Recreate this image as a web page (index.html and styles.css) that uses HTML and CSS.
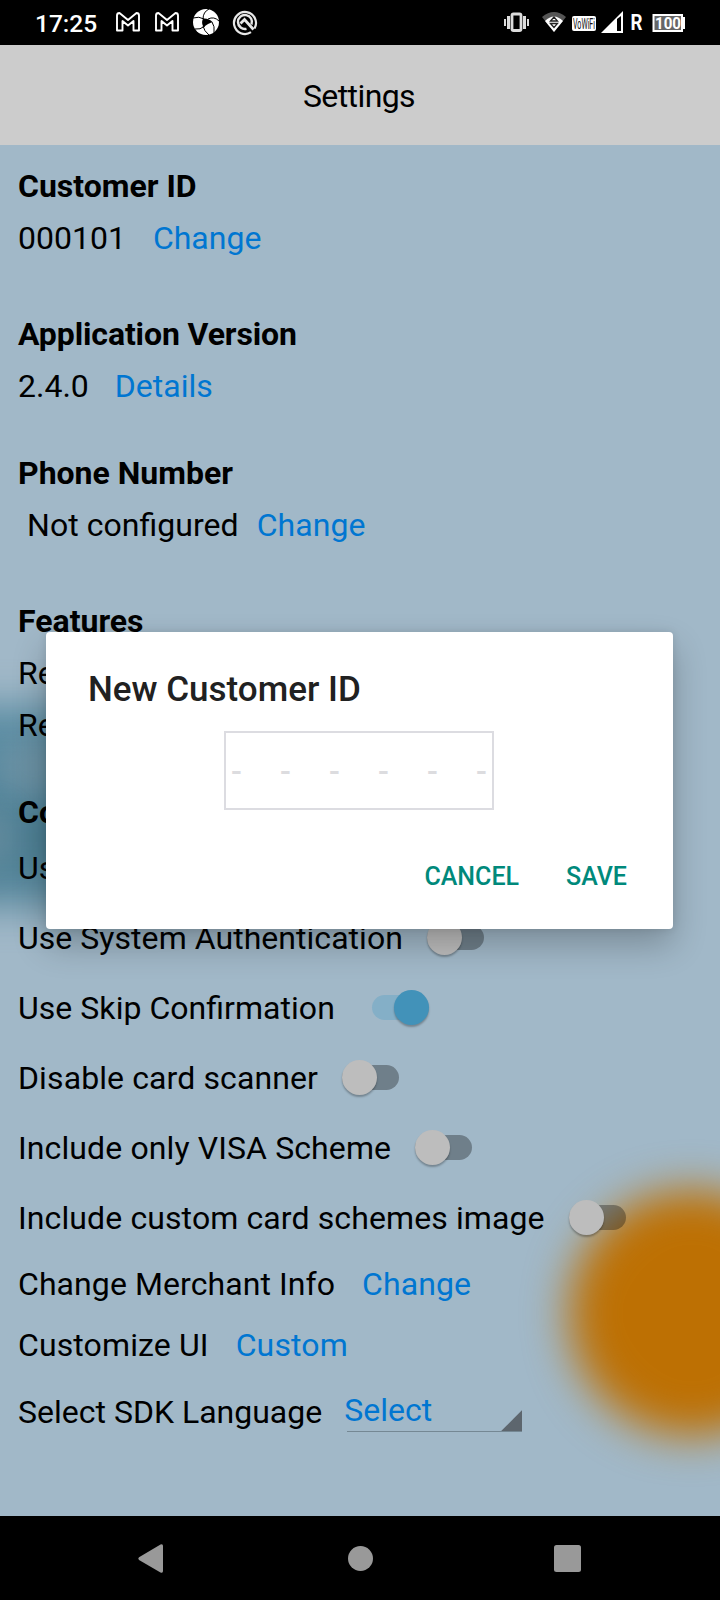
FILE: index.html
```html
<!DOCTYPE html>
<html lang="en">
<head>
<meta charset="utf-8">
<title>Settings</title>
<link rel="stylesheet" href="styles.css">
</head>
<body>
<div class="screen">
  <header class="status">
    <span class="clock">17:25</span>
    <svg class="notif" width="150" height="28" viewBox="0 0 150 28" fill="none" stroke="#fff">
      <g stroke-width="1.9" stroke-linejoin="round">
        <path d="M2 21.500V6.500Q2 4 4.500 4L13 11L21.500 4Q24 4 24 6.500V21.500H18.500V12L13 16.500L7.500 12V21.500Z"/>
        <path d="M41 21.500V6.500Q41 4 43.500 4L52 11L60.500 4Q63 4 63 6.500V21.500H57.500V12L52 16.500L46.500 12V21.500Z"/>
      </g>
      <circle cx="91" cy="13" r="13" fill="#fff" stroke="none"/>
      <path d="M88 9.500Q94 9 97.500 13Q92 15 88.500 18Q86 14 88 9.500Z" fill="#000" stroke="none"/>
      <path d="M78 9Q84 7 89 10M94 0Q88 3 88 10M104 12Q99 7 93 10M99 24Q100 17 97 13M80 20Q85 21 90 17M88 17Q89 22 94 26" stroke="#000" stroke-width="1"/>
      <g stroke="#e8e8e8">
        <path d="M136 23.200A11 11 0 1 1 139.500 19.500" stroke-width="2.200"/>
        <path d="M131.500 19.800A7 7 0 1 1 136.500 15.500" stroke-width="2.400"/>
        <path d="M125.500 14.500L129.500 10.500L138.500 20.500" stroke-width="2.800"/>
      </g>
    </svg>
    <svg class="system" width="184" height="24" viewBox="0 0 184 24">
      <g fill="#ddd">
        <rect x="0" y="8" width="2" height="7"/><rect x="3" y="5" width="3" height="13"/>
        <rect x="19" y="5" width="3" height="13"/><rect x="23" y="8" width="2" height="7"/>
      </g>
      <rect x="8" y="3" width="9" height="16.500" rx="1.500" fill="none" stroke="#ddd" stroke-width="2.800"/>
      <path d="M38 6Q50 -4 62 6L50 21Z" fill="#555"/>
      <path d="M41 10Q50 1 59 10L50 21Z" fill="#fff"/>
      <path d="M46.500 10L50 6L53.500 10ZM46.500 12.500L50 16.500L53.500 12.500Z" fill="none" stroke="#222" stroke-width="1.300"/>
      <rect x="68" y="5" width="24" height="15" rx="2" fill="#fff"/>
      <text x="69" y="18" class="vowifi" textLength="22" lengthAdjust="spacingAndGlyphs">VoWiFi</text>
      <path d="M97 22L119 0V22Z" fill="#fff"/><path d="M113 8V20H117V5Z" fill="#000"/>
      <text x="126.500" y="19" class="roam" textLength="12" lengthAdjust="spacingAndGlyphs">R</text>
      <path d="M148.500 3H179V6H181V18H179V21H148.500Z" fill="#fff"/>
      <rect x="150.500" y="5" width="26.500" height="14" fill="#666"/>
      <text x="151" y="18" class="level" textLength="26" lengthAdjust="spacingAndGlyphs">100</text>
    </svg>
  </header>

  <div class="titlebar">Settings</div>

  <main class="content">
    <div class="blob teal"></div>
    <div class="blob spot upper"></div>
    <div class="blob spot lower"></div>
    <div class="blob orange"></div>

    <section class="group">
      <h2>Customer ID</h2>
      <p><span>000101</span><a>Change</a></p>
    </section>
    <section class="group tight">
      <h2 class="version">Application Version</h2>
      <p class="number"><span>2.4.0</span><a>Details</a></p>
    </section>
    <section class="group">
      <h2>Phone Number</h2>
      <p class="phone"><span>Not configured</span><a>Change</a></p>
    </section>
    <section class="group tight">
      <h2>Features</h2>
      <p>Re</p>
      <p>Re</p>
    </section>
    <section>
      <h2>Co</h2>
      <div class="switches">
        <div class="option">Us</div>
        <div class="option snug">Use System Authentication<i class="switch"></i></div>
        <div class="option snug skip">Use Skip Confirmation<i class="switch on"></i></div>
        <div class="option">Disable card scanner<i class="switch"></i></div>
        <div class="option">Include only VISA Scheme<i class="switch"></i></div>
        <div class="option">Include custom card schemes image<i class="switch wide"></i></div>
      </div>
      <p class="merchant"><span>Change Merchant Info</span><a>Change</a></p>
      <p class="custom"><span>Customize UI</span><a>Custom</a></p>
      <p class="language"><span>Select SDK Language</span><a class="spinner">Select</a></p>
    </section>
  </main>

  <nav class="navbar">
    <svg width="720" height="84" viewBox="0 0 720 84" fill="#999">
      <path d="M139 41.300L160.500 28.500Q163 27.500 163 30V55Q163 57.500 160.500 56.500L139 44Q137.500 42.600 139 41.300Z"/>
      <circle cx="360.500" cy="42.500" r="12.500"/>
      <rect x="554" y="29" width="27" height="27" rx="2.500"/>
    </svg>
  </nav>

  <div class="dialog">
    <div class="dialog-title">New Customer ID</div>
    <div class="code"><span>-</span><span>-</span><span>-</span><span>-</span><span>-</span><span>-</span></div>
    <div class="actions"><button>CANCEL</button><button>SAVE</button></div>
  </div>
</div>
</body>
</html>
```
FILE: styles.css
```css
* { box-sizing: border-box; }
body { margin: 0; font-family: Roboto, sans-serif; font-size: 32px; color: #000; font-feature-settings: "liga"; }
h2, p { margin: 0; font-size: 32px; line-height: 52px; }
h2 { font-weight: 700; }
.screen { position: relative; width: 720px; height: 1600px; overflow: hidden; display: flex; flex-direction: column; background: #000; }

.status { height: 45px; display: flex; align-items: flex-start; padding-left: 35px; color: #fff; }
.clock { width: 80px; padding-top: 9px; font-size: 24.5px; line-height: 29px; font-weight: 500; }
.notif { margin-top: 9px; }
.system { margin: 11px 0 0 239px; }
.vowifi { font-size: 14px; font-weight: 400; fill: #111; }
.roam { font-size: 22px; font-weight: 700; fill: #fff; }
.level { font-size: 17px; font-weight: 700; fill: #fff; }

.titlebar { height: 100px; padding-right: 2px; background: #ccc; text-align: center; line-height: 102px; letter-spacing: -.6px; }

.content { position: relative; flex: 1; overflow: hidden; padding: 15px 18px 0; background: #a1b8c8; }
.content section { position: relative; white-space: nowrap; }
.group { margin-bottom: 44px; }
.group.tight { margin-bottom: 35px; }
.version { letter-spacing: -.12px; }
p { display: flex; }
a { margin-left: 27px; color: #0076d1; }
.number a { margin-left: 26px; }
.phone { padding-left: 9px; letter-spacing: .05px; }
.phone a { margin-left: 18px; }

.blob { position: absolute; border-radius: 50%; }
.teal { left: -80px; top: 560px; width: 290px; height: 202px; border-radius: 50px; background: linear-gradient(#5a8ca2 30%, #4a7c90 65%, #5b8ba0); filter: blur(19px); }
.spot { width: 70px; height: 60px; background: #7494a5; filter: blur(14px); }
.upper { left: -2px; top: 592px; opacity: .65; }
.lower { left: -52px; top: 662px; opacity: .5; }
.orange { left: 569px; top: 1045px; width: 246px; height: 246px; background: #bd7003; filter: blur(22px); }

.switches { display: flex; flex-direction: column; gap: 10px; letter-spacing: .11px; }
.option { display: flex; align-items: center; height: 60px; line-height: 60px; }
.snug { letter-spacing: .04px; }
.switch { position: relative; top: -1px; width: 57px; height: 25px; margin-left: 24px; border-radius: 13px; background: rgba(0, 0, 0, .31); }
.switch.wide { margin-left: 24.5px; }
.snug .switch { margin-left: 24.5px; }
.switch::after { content: ""; position: absolute; left: 0; top: -5px; width: 35px; height: 35px; border-radius: 50%; background: #bdbdbd; box-shadow: 0 2px 2px rgba(0, 0, 0, .28); }
.skip .switch { margin-left: 37.5px; }
.switch.on { background: #84afc7; }
.switch.on::after { left: 22px; background: #4292b9; }

.merchant { margin-top: 10px; letter-spacing: .08px; }
.custom { margin-top: 9px; letter-spacing: .12px; }
.language { margin-top: 15px; }
.spinner { position: relative; display: block; width: 178px; height: 46px; margin-left: 22px; line-height: 48px; }
.spinner::before { content: ""; position: absolute; left: 3px; right: 0; bottom: 0; height: 1px; background: #758894; }
.spinner::after { content: ""; position: absolute; right: 0; bottom: 1px; width: 21px; height: 21px; background: #5d666e; clip-path: polygon(100% 0, 100% 100%, 0 100%); }

.navbar { height: 84px; }
.navbar svg { display: block; }

.dialog { position: absolute; left: 46px; top: 632px; width: 627px; height: 297px; padding: 37px 34px 0 42px; border-radius: 4px; background: #fff; box-shadow: 0 16px 34px rgba(0, 0, 0, .24), 0 0 8px rgba(0, 0, 0, .1); }
.dialog-title { font-size: 35px; line-height: 41px; font-weight: 500; color: #212121; }
.code { display: flex; justify-content: space-between; width: 270px; height: 79px; margin: 21px 0 0 136px; padding: 0 5px; border: 2px solid #dcdce1; line-height: 77px; font-weight: 500; color: #dcdcdf; }
.actions { display: flex; justify-content: flex-end; gap: 47px; margin-top: 52px; padding-right: 12px; }
button { padding: 0; border: 0; background: none; font: 500 25px/30px Roboto, sans-serif; color: #00897b; }
```
